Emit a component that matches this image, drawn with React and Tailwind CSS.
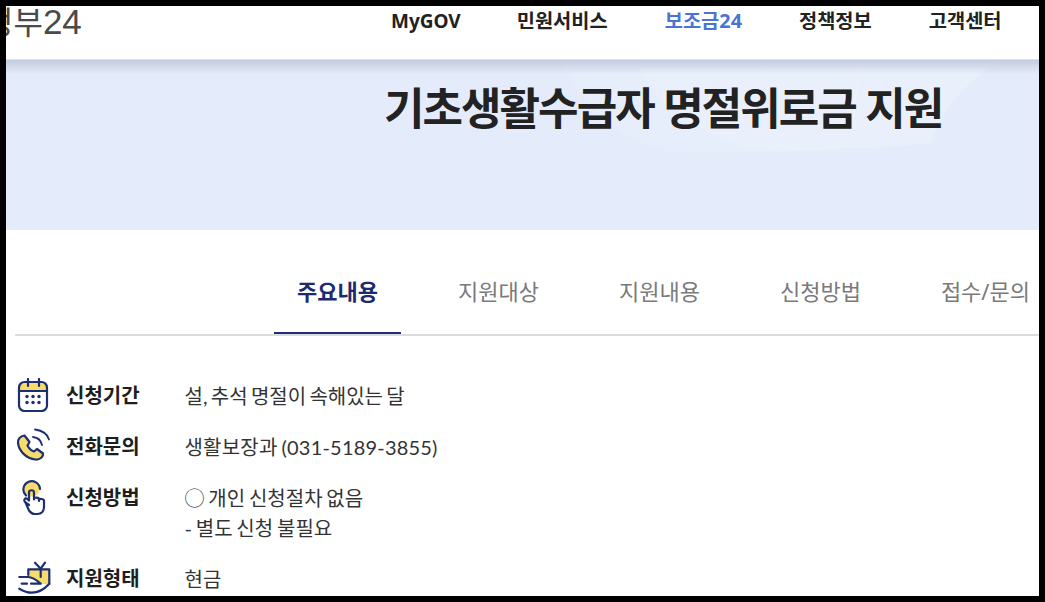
const NAVY = "#1c2f73";
const YEL = "#f8dc6b";

function Calendar() {
  return (
    <svg viewBox="0 0 36 36" className="w-9 h-9 shrink-0" fill="none" stroke={NAVY} strokeWidth="2.2" strokeLinecap="round">
      <path d="M3 13V9a5 5 0 0 1 5-5h18a5 5 0 0 1 5 5v4z" fill={YEL} stroke="none" />
      <rect x="3" y="4" width="28" height="29" rx="5.5" />
      <path d="M3 13h28M12 1v7M23 1v7" />
      <g fill={NAVY} stroke="none">
        <circle cx="11" cy="18.5" r="1.7" /><circle cx="17" cy="18.5" r="1.7" /><circle cx="23" cy="18.5" r="1.7" />
        <circle cx="11" cy="24.5" r="1.7" /><circle cx="17" cy="24.5" r="1.7" /><circle cx="23" cy="24.5" r="1.7" />
      </g>
    </svg>
  );
}

function Phone() {
  return (
    <svg viewBox="0 0 36 36" className="w-9 h-9 shrink-0 -mt-[1px]" fill="none" stroke={NAVY} strokeWidth="2.2" strokeLinecap="round" strokeLinejoin="round">
      <path d="M2 15C1.500 11.500 4 8 8.500 7.500L13.500 14L11.500 17.500C13 20.500 15 22.500 18 23.500L21 21L27 25.500C27.500 29 23.500 32 19.500 31.500C10 30.500 3 23 2 15Z" fill={YEL} />
      <path d="M19 1.500C26 2.500 31.500 6 33 11.500M17 9C21.500 9.500 25 12.500 26 17" strokeWidth="1.800" />
    </svg>
  );
}

function Hand() {
  return (
    <svg viewBox="0 0 36 36" className="w-9 h-9 shrink-0" fill="none" stroke={NAVY} strokeWidth="2.2" strokeLinecap="round" strokeLinejoin="round">
      <circle cx="15.700" cy="8.700" r="8" fill={YEL} stroke="none" />
      <path d="M10 15.500A8.300 8.300 0 1 1 24 9" />
      <path d="M13 25L9.500 22.500C7 20 9 17.500 11.500 19L13 20.500V12.500C13 9.500 18 9.500 18 12.500V19.500M18 19C18 17 23 17 23 19.500V21M23 20C23 18.500 28 18.500 28 21V26.500C28 31 25.500 34 21.500 34H18.500C16 34 14.500 32.500 13 30.500L9.500 22.500" />
    </svg>
  );
}

function Gift() {
  return (
    <svg viewBox="0 0 36 36" className="w-9 h-9 shrink-0" fill="none" stroke={NAVY} strokeWidth="2.2" strokeLinecap="round" strokeLinejoin="round">
      <path d="M12.300 8.300H33.300V23H25L12.300 16Z" fill={YEL} stroke="none" />
      <path d="M24.700 8V16M12.300 14V8.300H33.300V22.700M19 1.700L24.700 7.700L29 1.700" />
      <path d="M3.300 16H12.300C17 16 21 19.500 24.700 22.700H15M5.700 22.700H11M3.300 27.700C8 30.500 11.500 31.700 15.700 31.700C21 31.700 28 28.500 33.300 22.700" />
    </svg>
  );
}

const F = { fontFamily: '"Noto Sans", "Noto Sans CJK KR", sans-serif' };
const B = { fontFamily: 'Lato, "Noto Sans CJK KR", sans-serif' };

function Row({ icon, label, children }) {
  return (
    <div className="flex items-start">
      <div className="w-[50px] h-[30px] -mt-[3px] flex">{icon}</div>
      <div className="w-[118.500px] text-[20px] leading-[30px] font-bold text-[#1e1e1e]" style={F}>{label}</div>
      <div className="text-[20px] leading-[30px] [word-spacing:-1.3px] text-[#333]" style={B}>{children}</div>
    </div>
  );
}

export default function App() {
  return (
    <div className="w-[1045px] h-[602px] bg-black p-[6px] overflow-hidden">
      <div className="w-[1033px] h-[590px] bg-white overflow-hidden flex flex-col">
        <header className="h-[54px] shrink-0 flex overflow-hidden bg-white border-b border-[#dde0e6]">
          <div className="w-[407px] shrink-0 -mt-[1px] -ml-[22px] text-[32px] leading-[34px] text-[#4a4a4a] whitespace-nowrap" style={{ fontFamily: '"Liberation Sans", "Noto Sans CJK KR", sans-serif' }}>정부<span className="text-[35px]">24</span></div>
          <nav className="flex items-start gap-[57px] pt-[1px] text-[19.8px] leading-[28px] font-bold text-[#222] whitespace-nowrap" style={F}>
            <span className="text-[19px] -mr-[1px]">MyGOV</span>
            <span>민원서비스</span>
            <span className="text-[#4a73d8]">보조금24</span>
            <span>정책정보</span>
            <span>고객센터</span>
          </nav>
        </header>

        <section className="relative h-[170px] shrink-0 bg-[#e4ebfb] overflow-hidden">
          <svg className="absolute inset-0 w-full h-full" viewBox="0 0 1033 170" preserveAspectRatio="none">
            <path d="M556 0C575 50 620 82 660 92C730 95 800 92 845 88L855 0Z" fill="#ffffff" fillOpacity="0.1" />
            <path d="M629 0C650 45 690 72 740 88C780 92 815 92 845 88L855 0Z" fill="#ffffff" fillOpacity="0.12" />
            <path d="M855 0C850 30 845 60 845 88C870 88 900 86 925 83C935 50 960 22 995 0Z" fill="#ffffff" fillOpacity="0.2" />
          </svg>
          <div className="absolute inset-x-0 top-0 h-[14px] bg-gradient-to-b from-[#c3ccde] to-transparent" />
          <h1 className="relative pl-[378px] pt-[18px] text-[44px] leading-[60px] font-bold text-[#222] whitespace-nowrap tracking-[-1.950px]" style={F}>기초생활수급자 명절위로금 지원</h1>
        </section>

        <nav className="mt-[46px] ml-[9px] h-[60px] shrink-0 flex items-start pl-[259px] gap-[34px] border-b-2 border-[#dcdcdc] text-[22px] whitespace-nowrap" style={F}>
          <span className="h-[58px] px-[23px] leading-[30px] font-bold text-[#1c2a6e] border-b-2 border-[#1f2f7a]">주요내용</span>
          <span className="h-[58px] px-[23px] leading-[30px] text-[#7a7a7a]">지원대상</span>
          <span className="h-[58px] px-[23px] leading-[30px] text-[#7a7a7a]">지원내용</span>
          <span className="h-[58px] px-[23px] leading-[30px] text-[#7a7a7a]">신청방법</span>
          <span className="h-[58px] px-[23px] leading-[30px] text-[#7a7a7a]">접수/문의</span>
        </nav>

        <div className="mt-[45px] ml-[10px] flex flex-col gap-[21px]">
          <Row icon={<Calendar />} label="신청기간"><span className="[word-spacing:-1.800px]">설, 추석 명절이 속해있는 달</span></Row>
          <Row icon={<Phone />} label="전화문의"><span className="tracking-[0.2px]">생활보장과 (031-5189-3855)</span></Row>
          <Row icon={<Hand />} label="신청방법">
            <div>◯ 개인 신청절차 없음</div>
            <div>- 별도 신청 불필요</div>
          </Row>
          <Row icon={<Gift />} label="지원형태">현금</Row>
        </div>
      </div>
    </div>
  );
}
